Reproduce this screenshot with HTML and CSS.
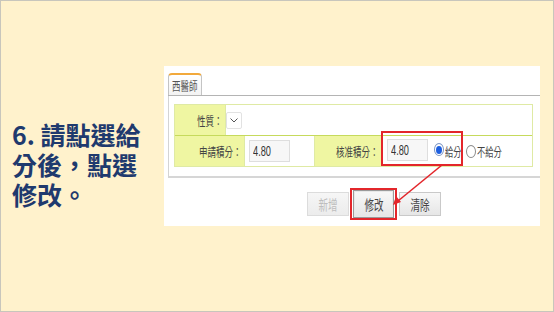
FILE: index.html
```html
<!DOCTYPE html>
<html lang="zh-TW">
<head>
  <meta charset="UTF-8" />
  <title>給分後修改</title>
  <link rel="stylesheet" href="styles.css">
</head>
<body>
  <div class="slide">
    <p class="caption" lang="zh-TW">6. 請點選給<br>分後，點選<br>修改。</p>

    <div class="shot">
      <div class="tabbar">
        <span class="tab"><span class="sq">西醫師</span></span>
      </div>

      <div class="tabbody">
        <div class="form">
          <div class="row row-kind">
            <div class="label"><span class="sq">性質：</span></div>
            <div class="value">
              <span class="select">
                <svg width="8" height="5" viewBox="0 0 8 5"><polyline points="0.5,0.5 4,4 7.5,0.5" fill="none" stroke="#555" stroke-width="1"/></svg>
              </span>
            </div>
          </div>
          <div class="row row-score">
            <div class="label"><span class="sq">申請積分：</span></div>
            <div class="value"><span class="field"><span class="sq num">4.80</span></span></div>
            <div class="label"><span class="sq">核准積分：</span></div>
            <div class="value">
              <span class="field"><span class="sq num">4.80</span></span>
              <span class="radio checked"></span><span class="opt"><span class="sq">給分</span></span>
              <span class="radio"></span><span class="opt wide"><span class="sq">不給分</span></span>
            </div>
          </div>
        </div>
      </div>

      <div class="actions">
        <button class="btn" disabled><span class="sq">新增</span></button>
        <span class="mark"><button class="btn focus"><span class="sq">修改</span></button></span>
        <button class="btn"><span class="sq">清除</span></button>
      </div>

      <!-- annotations drawn over the screenshot -->
      <div class="box-mark"></div>
      <svg class="arrow" width="376" height="160" viewBox="0 0 376 160">
        <line x1="278" y1="99" x2="234" y2="135" stroke="#e3262b" stroke-width="1.6"/>
        <polygon points="229,139 232,130 237,136" fill="#e3262b"/>
      </svg>
    </div>
  </div>
</body>
</html>
```

FILE: styles.css
```css
body {
  margin: 0;
  font-family: "Noto Sans CJK TC", "Noto Sans", sans-serif;
}
.slide {
  width: 554px;
  height: 312px;
  box-sizing: border-box;
  border: 1px solid #c8c6bc;
  background: #fff2cc;
  display: flex;
  align-items: flex-start;
}
.caption {
  margin: 118px 0 0 11px;
  font-size: 25px;
  line-height: 30px;
  font-weight: bold;
  color: #1f3a6e;
  white-space: nowrap;
}
.shot {
  position: relative;
  width: 376px;
  height: 160px;
  box-sizing: border-box;
  margin: 65px 13px 0 auto;
  padding: 7px 0 0 4px;
  background: #fff;
  font-size: 12.5px;
  color: #444;
}
.sq {
  display: inline-block;
  transform: scaleX(.68);
  white-space: nowrap;
}
.tabbar {
  height: 22px;
  border-bottom: 1px solid #b4b4b4;
}
.tab {
  display: inline-flex;
  align-items: center;
  justify-content: center;
  width: 34px;
  height: 22px;
  box-sizing: border-box;
  border: 1px solid #c4c4c4;
  border-top: 2px solid #f2a93b;
  border-bottom: none;
  border-radius: 4px 4px 0 0;
  background: linear-gradient(#fff, #f3f3f3);
  color: #555;
}
.tabbody {
  border-left: 1px solid #d4d4d4;
  border-bottom: 2px solid #d6d6d6;
  padding: 8px 7px 9px 5px;
}
.form {
  border: 1px solid #dfeaa4;
}
.row {
  display: grid;
  height: 30px;
}
.row-kind {
  grid-template-columns: 51px 1fr;
}
.row-score {
  grid-template-columns: 70px 70px 67px 1fr;
  border-top: 1px solid #c6da5c;
}
.label {
  background: #eff6a2;
  display: flex;
  align-items: center;
  justify-content: flex-end;
  padding-right: 2px;
  border-right: 1px solid #dfeaa4;
}
.label .sq {
  transform-origin: right center;
}
.value {
  display: flex;
  align-items: center;
  border-right: 1px solid #dfeaa4;
}
.value:last-child {
  border-right: none;
}
.select {
  width: 16px;
  height: 17px;
  box-sizing: border-box;
  border: 1px solid #e2e2e2;
  border-radius: 2px;
  display: flex;
  align-items: center;
  justify-content: center;
}
.field {
  width: 41px;
  height: 22px;
  box-sizing: border-box;
  border: 1px solid #dedede;
  background: #f7f7f7;
  display: flex;
  align-items: center;
  padding-left: 3px;
  margin-left: 4px;
}
.num {
  font-family: "Liberation Sans", Arial, sans-serif;
  font-size: 14px;
  color: #333;
  transform-origin: left center;
  transform: scaleX(.66);
}
.row-score .value:last-child .field {
  margin-left: 5px;
  margin-top: -2px;
}
.radio {
  width: 10px;
  height: 13px;
  box-sizing: border-box;
  border: 1px solid #8a8a8a;
  border-radius: 50%;
  background: #fff;
  margin: -3px 0 0 6px;
  position: relative;
}
.radio.checked {
  border-color: #7d96c4;
}
.radio.checked::after {
  content: "";
  position: absolute;
  left: 1px;
  top: 1.5px;
  width: 6px;
  height: 8px;
  border-radius: 50%;
  background: #1d5fe0;
}
.radio:not(.checked) {
  margin-left: 3px;
  margin-top: 0;
}
.opt {
  width: 18px;
  margin-left: 1px;
}
.opt.wide {
  width: 27px;
}
.opt .sq {
  transform-origin: left center;
  transform: scaleX(.66);
}
.actions {
  display: flex;
  align-items: center;
  margin-top: 10px;
  padding-left: 139px;
}
.btn {
  width: 42px;
  height: 24px;
  padding: 0;
  border: 1px solid #c9c9c9;
  border-radius: 0;
  background: linear-gradient(#f8f8f8, #e6e6e6);
  font-family: inherit;
  font-size: 14px;
  color: #444;
}
.btn[disabled] {
  color: #bdbdbd;
  background: linear-gradient(#f6f6f6, #ececec);
  border-color: #dcdcdc;
}
.btn .sq {
  transform-origin: center;
}
.mark {
  display: flex;
  padding: 0 1px;
  margin: 0 2px 0 1px;
  border: 2px solid #e3262b;
}
.btn.focus {
  width: 41px;
  height: 28px;
  border: 1px solid #9a9a9a;
  box-shadow: inset 0 0 0 1px #e8e8e8;
}
.box-mark {
  position: absolute;
  left: 217px;
  top: 65px;
  width: 82px;
  height: 35px;
  box-sizing: border-box;
  border: 2px solid #e3262b;
}
.arrow {
  position: absolute;
  left: 0;
  top: 0;
}
```
